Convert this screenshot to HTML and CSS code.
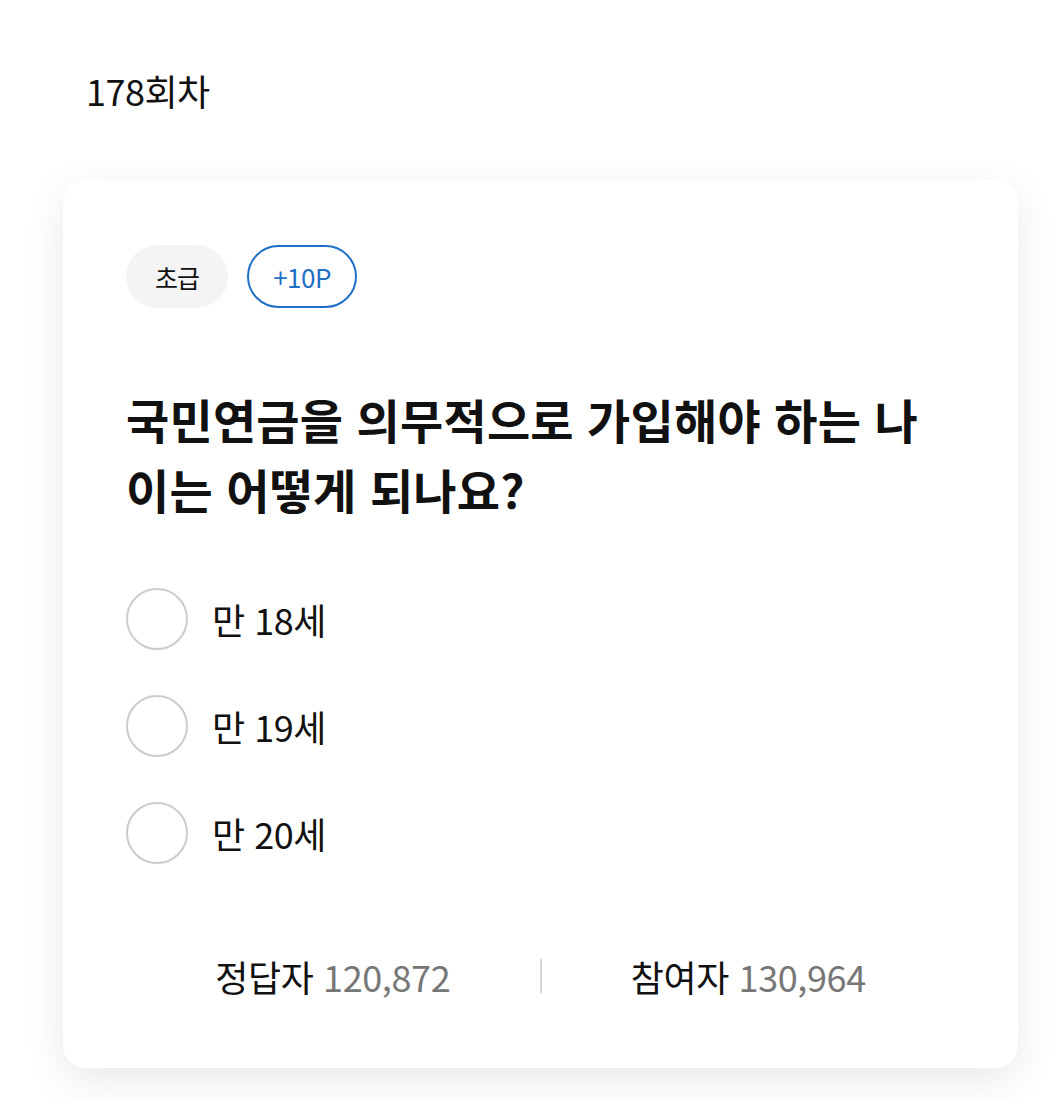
FILE: index.html
```html
<!DOCTYPE html>
<html lang="ko">
<head>
<meta charset="utf-8">
<link rel="stylesheet" href="styles.css">
</head>
<body>
<main class="page">
  <h1 class="round">178회차</h1>
  <section class="card">
    <div class="badges">
      <span class="badge badge-level">초급</span>
      <span class="badge badge-point">+10P</span>
    </div>
    <h2 class="question">국민연금을 의무적으로 가입해야 하는 나이는 어떻게 되나요?</h2>
    <ul class="options">
      <li class="option"><span class="radio"></span><span class="option-text">만 18세</span></li>
      <li class="option"><span class="radio"></span><span class="option-text">만 19세</span></li>
      <li class="option"><span class="radio"></span><span class="option-text">만 20세</span></li>
    </ul>
    <div class="stats">
      <div class="stat"><span class="stat-label">정답자</span> <span class="stat-num">120,872</span></div>
      <span class="divider"></span>
      <div class="stat"><span class="stat-label">참여자</span> <span class="stat-num">130,964</span></div>
    </div>
  </section>
</main>
</body>
</html>
```

FILE: styles.css
```css
* { box-sizing: border-box; }
html, body {
  margin: 0;
  padding: 0;
  background: #ffffff;
}
body {
  font-family: "Noto Sans CJK KR", "Noto Sans", sans-serif;
  color: #111111;
}
.page {
  width: 955px;
  margin-left: 63px;
  padding-top: 60px;
  padding-bottom: 40px;
}
.round {
  margin: 0 0 0 23px;
  font-size: 36px;
  font-weight: 400;
  line-height: 60px;
  letter-spacing: -0.5px;
}
.card {
  margin-top: 60px;
  background: #fff;
  border-radius: 22px;
  box-shadow: 0 12px 40px rgba(0, 0, 0, 0.09);
  padding: 65px 63px 72px 63px;
}
.badges {
  display: flex;
  gap: 19px;
}
.badge {
  height: 63px;
  border-radius: 32px;
  display: inline-flex;
  align-items: center;
  justify-content: center;
  font-size: 25px;
}
.badge-level {
  width: 102px;
  background: #f4f4f4;
  color: #111;
  letter-spacing: -1px;
}
.badge-point {
  width: 110px;
  border: 2px solid #1f6fc6;
  color: #1f6fc6;
  font-size: 26px;
  letter-spacing: -0.5px;
}
.question {
  margin: 76px 0 0 0;
  max-width: 810px;
  font-size: 47px;
  font-weight: 700;
  line-height: 70px;
  letter-spacing: 0.2px;
  color: #111;
}
.options {
  list-style: none;
  margin: 64px 0 0 0;
  padding: 0;
  display: flex;
  flex-direction: column;
  gap: 45px;
}
.option {
  display: flex;
  align-items: center;
  height: 62px;
}
.radio {
  width: 62px;
  height: 62px;
  border-radius: 50%;
  border: 2.5px solid #cccccc;
  flex: none;
}
.option-text {
  margin-left: 24px;
  font-size: 36px;
  letter-spacing: -0.5px;
}
.stats {
  margin-top: 92px;
  display: flex;
  align-items: center;
}
.stat {
  flex: 1;
  text-align: center;
  font-size: 36px;
  line-height: 40px;
  letter-spacing: -0.4px;
}
.stat-num {
  color: #777777;
}
.divider {
  width: 2px;
  height: 34px;
  background: #d6d6d6;
  flex: none;
}
```
